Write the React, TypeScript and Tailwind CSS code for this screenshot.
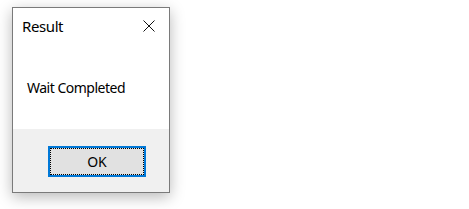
export default function App() {
  return (
    <div className="min-h-[209px] w-[469px] bg-white pl-[12px] pt-[7px]" style={{ fontFamily: '"Noto Sans", "Segoe UI", sans-serif' }}>
      <div className="flex h-[186px] w-[158px] flex-col border border-[#7a7a7a] bg-white shadow-[0_4px_14px_rgba(0,0,0,0.28)]">
        {/* Title bar */}
        <div className="flex h-[32px] items-start justify-between pl-[9px] pr-[14px]">
          <span className="pt-[8px] text-[15px] leading-[20px] tracking-[-0.4px] text-black">Result</span>
          <svg width="12" height="12" viewBox="0 0 12 12" className="mt-[12px]" fill="none" stroke="#111" strokeWidth="1">
            <path d="M0.5 0.5 L11.5 11.5 M11.5 0.5 L0.5 11.5" />
          </svg>
        </div>
        {/* Message */}
        <div className="h-[89px] pl-[14px] pt-[35px]">
          <span className="text-[14px] leading-[20px] tracking-[-0.5px] text-black">Wait Completed</span>
        </div>
        {/* Footer */}
        <div className="flex-1 bg-[#f0f0f0] pl-[35px] pt-[17px]">
          <button
            type="button"
            className="flex h-[31px] w-[98px] items-center justify-center border-2 border-[#0078d7] bg-[#e1e1e1] p-0"
          >
            <span className="flex h-full w-full items-center justify-center border border-dotted border-black text-[14px] text-black">
              OK
            </span>
          </button>
        </div>
      </div>
    </div>
  );
}
